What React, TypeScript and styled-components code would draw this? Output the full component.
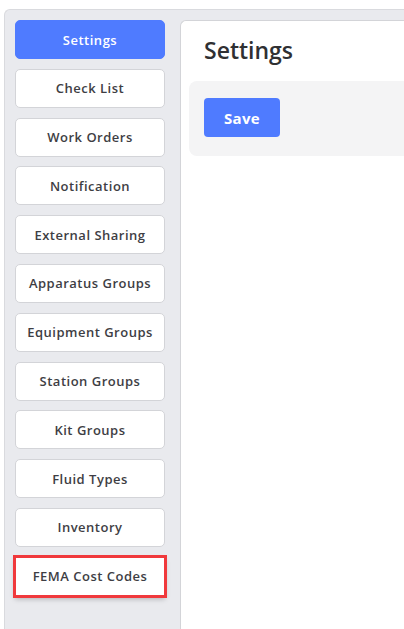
import styled, { createGlobalStyle } from "styled-components";

const GlobalStyle = createGlobalStyle`
  html, body {
    margin: 0;
    padding: 0;
    background: #ffffff;
    overflow: hidden;
  }
  body {
    font-family: "Open Sans", "Liberation Sans", sans-serif;
  }
`;

const Frame = styled.div`
  display: flex;
  gap: 15px;
  margin: 9px 0 0 4px;
  padding: 10px 0 0 10px;
  height: 620px;
  box-sizing: border-box;
  background: #e9eaee;
  border: 1px solid #d9dade;
  border-right: none;
  border-bottom: none;
  border-radius: 6px 0 0 0;
`;

const Sidebar = styled.nav`
  display: flex;
  flex-direction: column;
  gap: 9.8px;
  width: 150px;
  flex-shrink: 0;
`;

const NavButton = styled.button<{ $active?: boolean; $marked?: boolean }>`
  height: 39px;
  width: 150px;
  flex-shrink: 0;
  box-sizing: border-box;
  border-radius: 5px;
  border: 1px solid ${({ $active }) => ($active ? "#4f7bff" : "#d3d4d8")};
  background: ${({ $active }) => ($active ? "#4f7bff" : "#ffffff")};
  color: ${({ $active }) => ($active ? "#ffffff" : "#3e3e44")};
  font-family: "Open Sans", "Liberation Sans", sans-serif;
  font-size: 13px;
  font-weight: 600;
  letter-spacing: 0.5px;
  cursor: pointer;
  ${({ $marked }) =>
    $marked &&
    `
    outline: 3px solid #f0393c;
    outline-offset: -1px;
    border-radius: 0;
    box-shadow: 0 3px 5px rgba(0, 0, 0, 0.25);
  `}
`;

const Main = styled.main`
  flex: 1;
  background: #ffffff;
  border: 1px solid #d3d4d8;
  border-right: none;
  border-bottom: none;
  border-radius: 6px 0 0 0;
  padding: 13px 0 0 8px;
`;

const Title = styled.h1`
  margin: 0 0 15px 15px;
  font-family: "Open Sans", "Liberation Sans", sans-serif;
  font-size: 23px;
  font-weight: 600;
  color: #2f3033;
  line-height: 32px;
`;

const ActionCard = styled.div`
  background: #f4f4f5;
  border-radius: 8px 0 0 8px;
  padding: 17px 15px 19px;
`;

const SaveButton = styled.button`
  width: 76px;
  height: 39px;
  border: none;
  border-radius: 4px;
  background: #4f7bff;
  color: #ffffff;
  font-family: "Open Sans", "Liberation Sans", sans-serif;
  font-size: 15px;
  font-weight: 700;
  letter-spacing: 0.3px;
  cursor: pointer;
`;

const items = [
  "Settings",
  "Check List",
  "Work Orders",
  "Notification",
  "External Sharing",
  "Apparatus Groups",
  "Equipment Groups",
  "Station Groups",
  "Kit Groups",
  "Fluid Types",
  "Inventory",
  "FEMA Cost Codes",
];

export default function App() {
  return (
    <>
      <GlobalStyle />
      <Frame>
        <Sidebar>
          {items.map((label) => (
            <NavButton
              key={label}
              $active={label === "Settings"}
              $marked={label === "FEMA Cost Codes"}
            >
              {label}
            </NavButton>
          ))}
        </Sidebar>
        <Main>
          <Title>Settings</Title>
          <ActionCard>
            <SaveButton>Save</SaveButton>
          </ActionCard>
        </Main>
      </Frame>
    </>
  );
}
